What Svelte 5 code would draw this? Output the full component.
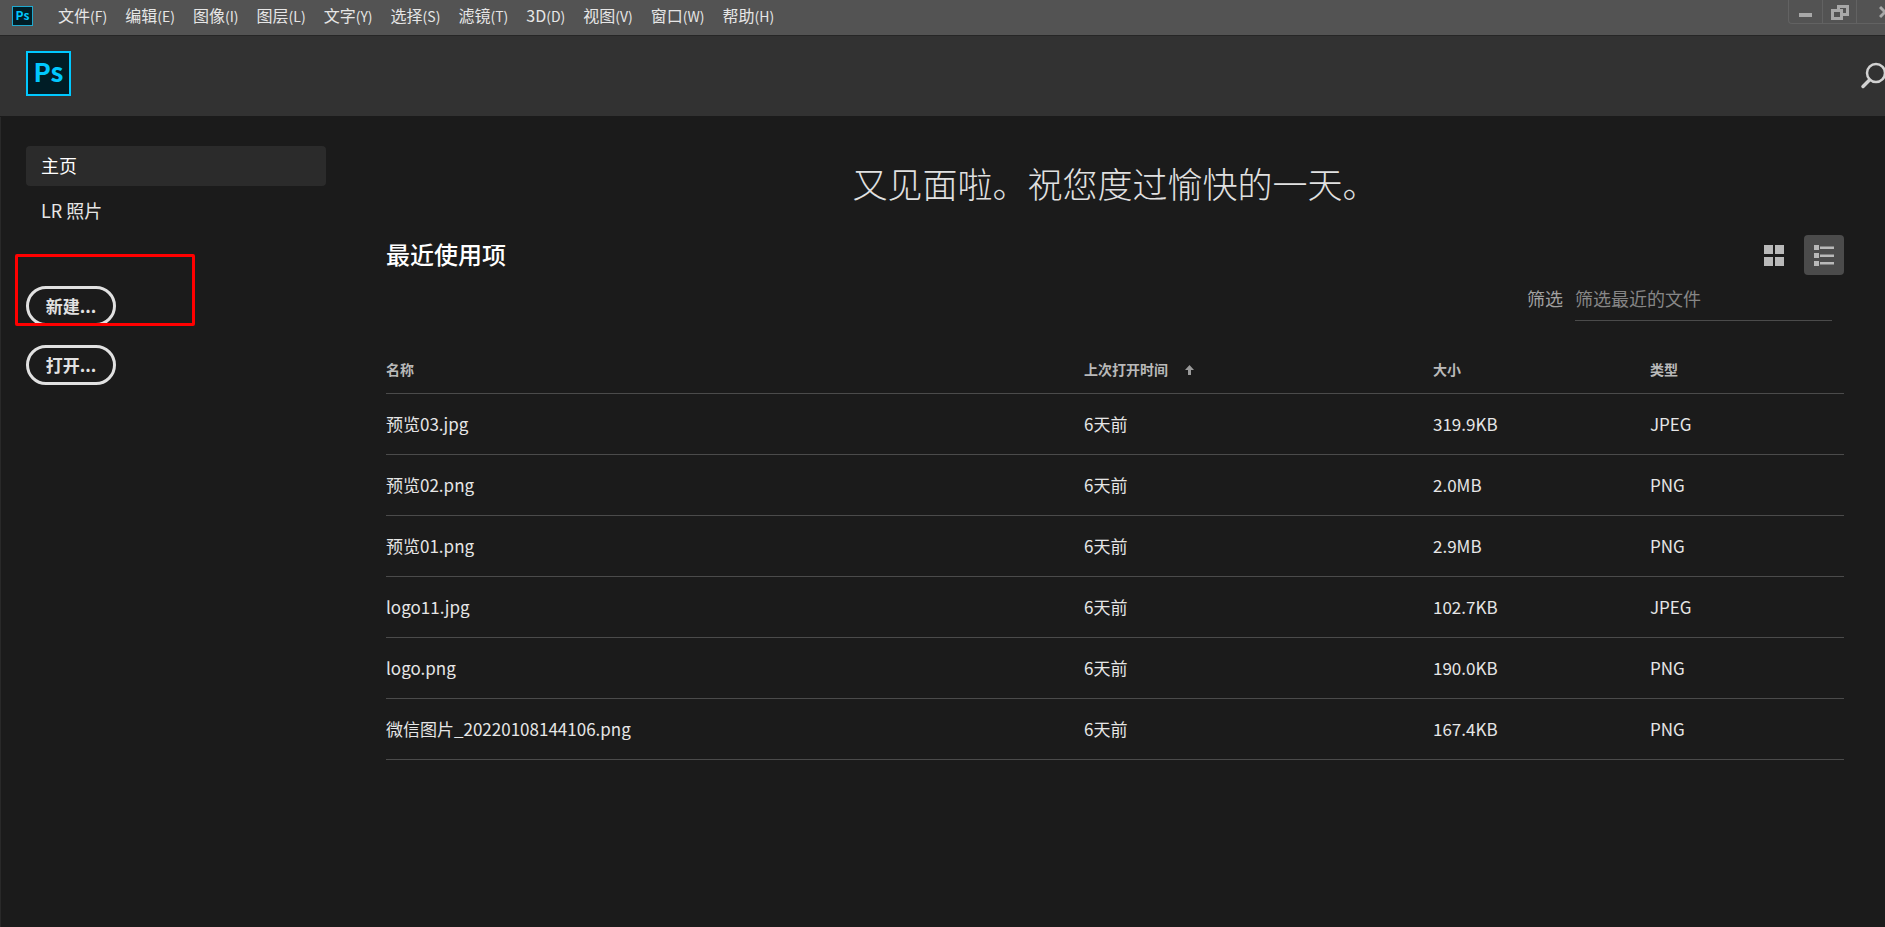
<script lang="ts">
    type RecentFile = { name: string; opened: string; size: string; type: string };

    const menus = [
        { label: '文件', key: 'F' },
        { label: '编辑', key: 'E' },
        { label: '图像', key: 'I' },
        { label: '图层', key: 'L' },
        { label: '文字', key: 'Y' },
        { label: '选择', key: 'S' },
        { label: '滤镜', key: 'T' },
        { label: '3D', key: 'D' },
        { label: '视图', key: 'V' },
        { label: '窗口', key: 'W' },
        { label: '帮助', key: 'H' },
    ];

    const files: RecentFile[] = [
        { name: '预览03.jpg', opened: '6天前', size: '319.9KB', type: 'JPEG' },
        { name: '预览02.png', opened: '6天前', size: '2.0MB', type: 'PNG' },
        { name: '预览01.png', opened: '6天前', size: '2.9MB', type: 'PNG' },
        { name: 'logo11.jpg', opened: '6天前', size: '102.7KB', type: 'JPEG' },
        { name: 'logo.png', opened: '6天前', size: '190.0KB', type: 'PNG' },
        { name: '微信图片_20220108144106.png', opened: '6天前', size: '167.4KB', type: 'PNG' },
    ];

    let filter = $state('');
    let view = $state('list');
    let shown = $derived(files.filter((f) => f.name.includes(filter)));
</script>

<div class="app">
    <div class="menubar">
        <span class="logo logo-small">Ps</span>
        <nav class="menus">
            {#each menus as menu}
                <button class="menu">{menu.label}<span class="key">({menu.key})</span></button>
            {/each}
        </nav>
        <div class="window-controls">
            <button class="control" aria-label="最小化">
                <svg width="14" height="20" viewBox="0 0 14 20"><path d="M0 13h13v4H0z" fill="#a8a8a8" /></svg>
            </button>
            <button class="control" aria-label="还原">
                <svg width="18" height="20" viewBox="0 0 18 20" fill="none" stroke="#a8a8a8" stroke-width="3">
                    <path d="M7.5 9V6.5h9v8H12" />
                    <path d="M1.5 10.500h9v8h-9z" />
                </svg>
            </button>
            <button class="control close" aria-label="关闭">
                <svg width="14" height="20" viewBox="0 0 14 20" fill="none" stroke="#a8a8a8" stroke-width="3">
                    <path d="M1 7l10 10M11 7L1 17" />
                </svg>
            </button>
        </div>
    </div>

    <header class="header">
        <span class="logo">Ps</span>
        <button class="search" aria-label="搜索">
            <svg width="26" height="28" viewBox="0 0 26 28" fill="none" stroke="#d2d2d2">
                <circle cx="16" cy="11" r="9" stroke-width="2.500" />
                <path d="M9.500 18L3 24.500" stroke-width="3.500" stroke-linecap="round" />
            </svg>
        </button>
    </header>

    <div class="body">
        <aside class="sidebar">
            <nav class="nav">
                <a class="nav-item active" href="#home">主页</a>
                <a class="nav-item" href="#lr">LR 照片</a>
            </nav>
            <div class="actions">
                <div class="marked">
                    <button class="pill">新建...</button>
                    <span class="marker"></span>
                </div>
                <button class="pill">打开...</button>
            </div>
        </aside>

        <main class="main">
            <h1 class="greeting">又见面啦。祝您度过愉快的一天。</h1>

            <div class="toolbar">
                <h2 class="title">最近使用项</h2>
                <div class="views">
                    <button class="view" class:selected={view === 'grid'} aria-label="网格视图" onclick={() => (view = 'grid')}>
                        <svg width="20" height="21" viewBox="0 0 20 21" fill="#b9b9b9">
                            <path d="M0 0h9v9H0zM11 0h9v9h-9zM0 12h9v9H0zM11 12h9v9h-9z" />
                        </svg>
                    </button>
                    <button class="view" class:selected={view === 'list'} aria-label="列表视图" onclick={() => (view = 'list')}>
                        <svg width="20" height="21" viewBox="0 0 20 21" fill="#b9b9b9">
                            <path d="M0 0h5v5H0zM0 8h5v5H0zM0 16h5v5H0z" />
                            <path d="M6 1.500h14v2.500H6zM6 9.500h14v2.500H6zM6 17h14v2.500H6z" />
                        </svg>
                    </button>
                </div>
            </div>

            <div class="filter">
                <label for="filter">筛选</label>
                <input id="filter" type="text" placeholder="筛选最近的文件" bind:value={filter} />
            </div>

            <table class="files">
                <thead>
                    <tr>
                        <th>名称</th>
                        <th class="col-opened">
                            上次打开时间
                            <svg class="sort" width="9" height="10" viewBox="0 0 9 10" fill="#9a9a9a">
                                <path d="M4.500 0L9 5H6V10H3V5H0z" />
                            </svg>
                        </th>
                        <th class="col-size">大小</th>
                        <th class="col-type">类型</th>
                    </tr>
                </thead>
                <tbody>
                    {#each shown as file}
                        <tr>
                            <td>{file.name}</td>
                            <td>{file.opened}</td>
                            <td>{file.size}</td>
                            <td>{file.type}</td>
                        </tr>
                    {/each}
                </tbody>
            </table>
        </main>
    </div>
</div>

<style>
    :global(body) {
        background: #1b1b1b;
    }

    .app {
        min-height: 100vh;
        display: flex;
        flex-direction: column;
        overflow: hidden;
        color: #e6e6e6;
        font-family: "Noto Sans CJK SC", sans-serif;
        font-size: 18px;
    }

    button, input {
        font: inherit;
        color: inherit;
        background: none;
        border: none;
        padding: 0;
        margin: 0;
    }

    .menubar {
        display: flex;
        height: 35px;
        padding-left: 12px;
        background: #535353;
        border-bottom: 1px solid #262626;
    }

    .logo {
        box-sizing: border-box;
        width: 45px;
        height: 45px;
        border: 2px solid #00c8ff;
        background: #001d26;
        color: #00c8ff;
        font-size: 26px;
        font-weight: 700;
        line-height: 36px;
        text-align: center;
    }

    .logo-small {
        width: 21px;
        height: 20px;
        margin-top: 6px;
        border: 1px solid #1fa9cf;
        font-size: 12px;
        line-height: 16px;
    }

    .menus {
        display: flex;
        gap: 18px;
        margin-left: 25px;
    }

    .menu {
        font-size: 16px;
        line-height: 30px;
        height: 30px;
        white-space: nowrap;
    }

    .key {
        font-size: 14px;
    }

    .window-controls {
        display: flex;
        height: 23px;
        margin-left: auto;
        margin-right: -31px;
        border: 1px solid #626262;
        border-top: none;
        border-radius: 0 0 4px 4px;
    }

    .control {
        display: flex;
        justify-content: center;
        width: 34px;
        border-right: 1px solid #626262;
    }

    .close {
        width: 58px;
        border-right: none;
    }

    .header {
        display: flex;
        align-items: flex-start;
        justify-content: space-between;
        height: 65px;
        padding: 15px 0 0 26px;
        background: #323232;
        border-bottom: 1px solid #1b1b1b;
    }

    .search {
        margin-top: 11px;
        margin-right: -1px;
    }

    .body {
        flex: 1;
        display: flex;
        gap: 60px;
        padding: 29px 41px 0 25px;
        border-left: 1px solid #292929;
    }

    .sidebar {
        flex: none;
        width: 300px;
    }

    .nav {
        display: flex;
        flex-direction: column;
        gap: 5px;
    }

    .nav-item {
        box-sizing: border-box;
        height: 40px;
        padding-left: 15px;
        border-radius: 4px;
        color: #e6e6e6;
        line-height: 38px;
        text-decoration: none;
    }

    .active {
        background: #2b2b2b;
        color: #fff;
    }

    .actions {
        display: flex;
        flex-direction: column;
        align-items: flex-start;
        gap: 19px;
        margin-top: 55px;
    }

    .pill {
        display: block;
        width: 90px;
        height: 40px;
        border: 3px solid #e1e1e1;
        border-radius: 20px;
        color: #e1e1e1;
        font-size: 17px;
        font-weight: 700;
        line-height: 32px;
    }

    .marked {
        position: relative;
    }

    /* highlight drawn over the button */
    .marker {
        position: absolute;
        box-sizing: border-box;
        left: -11px;
        top: -32px;
        width: 180px;
        height: 72px;
        border: 3px solid #f00;
        border-radius: 2px;
    }

    .main {
        flex: 1;
        min-width: 0;
    }

    .greeting {
        margin: 11px 0 0;
        color: #e1e1e1;
        font-size: 35px;
        font-weight: 300;
        line-height: 52px;
        text-align: center;
    }

    .toolbar {
        display: flex;
        align-items: center;
        justify-content: space-between;
        margin-top: 26px;
    }

    .title {
        margin: 0;
        padding-bottom: 2px;
        color: #fff;
        font-size: 24px;
        font-weight: 500;
        line-height: 38px;
    }

    .views {
        display: flex;
        gap: 10px;
    }

    .view {
        display: flex;
        align-items: center;
        justify-content: center;
        width: 40px;
        height: 40px;
        border-radius: 4px;
    }

    .selected {
        background: #4b4b4b;
    }

    .filter {
        display: flex;
        justify-content: flex-end;
        gap: 12px;
        margin: 4px 12px 0 0;
        color: #a0a0a0;
        line-height: 38px;
    }

    .filter input {
        width: 257px;
        height: 38px;
        padding-bottom: 3px;
        border-bottom: 1px solid #4b4b4b;
        outline: none;
    }

    .filter input::placeholder {
        color: #868686;
        opacity: 1;
    }

    .files {
        width: 100%;
        margin-top: 26px;
        border-collapse: collapse;
        table-layout: fixed;
        text-align: left;
    }

    .files th, .files td {
        padding: 0 0 2px;
        border-bottom: 1px solid #4b4b4b;
    }

    .files th {
        height: 44px;
        color: #b9b9b9;
        font-size: 14px;
        font-weight: 700;
    }

    .files td {
        height: 58px;
        font-size: 17px;
    }

    .col-opened {
        width: 349px;
    }

    .col-size {
        width: 217px;
    }

    .col-type {
        width: 194px;
    }

    .sort {
        margin-left: 14px;
    }
</style>
